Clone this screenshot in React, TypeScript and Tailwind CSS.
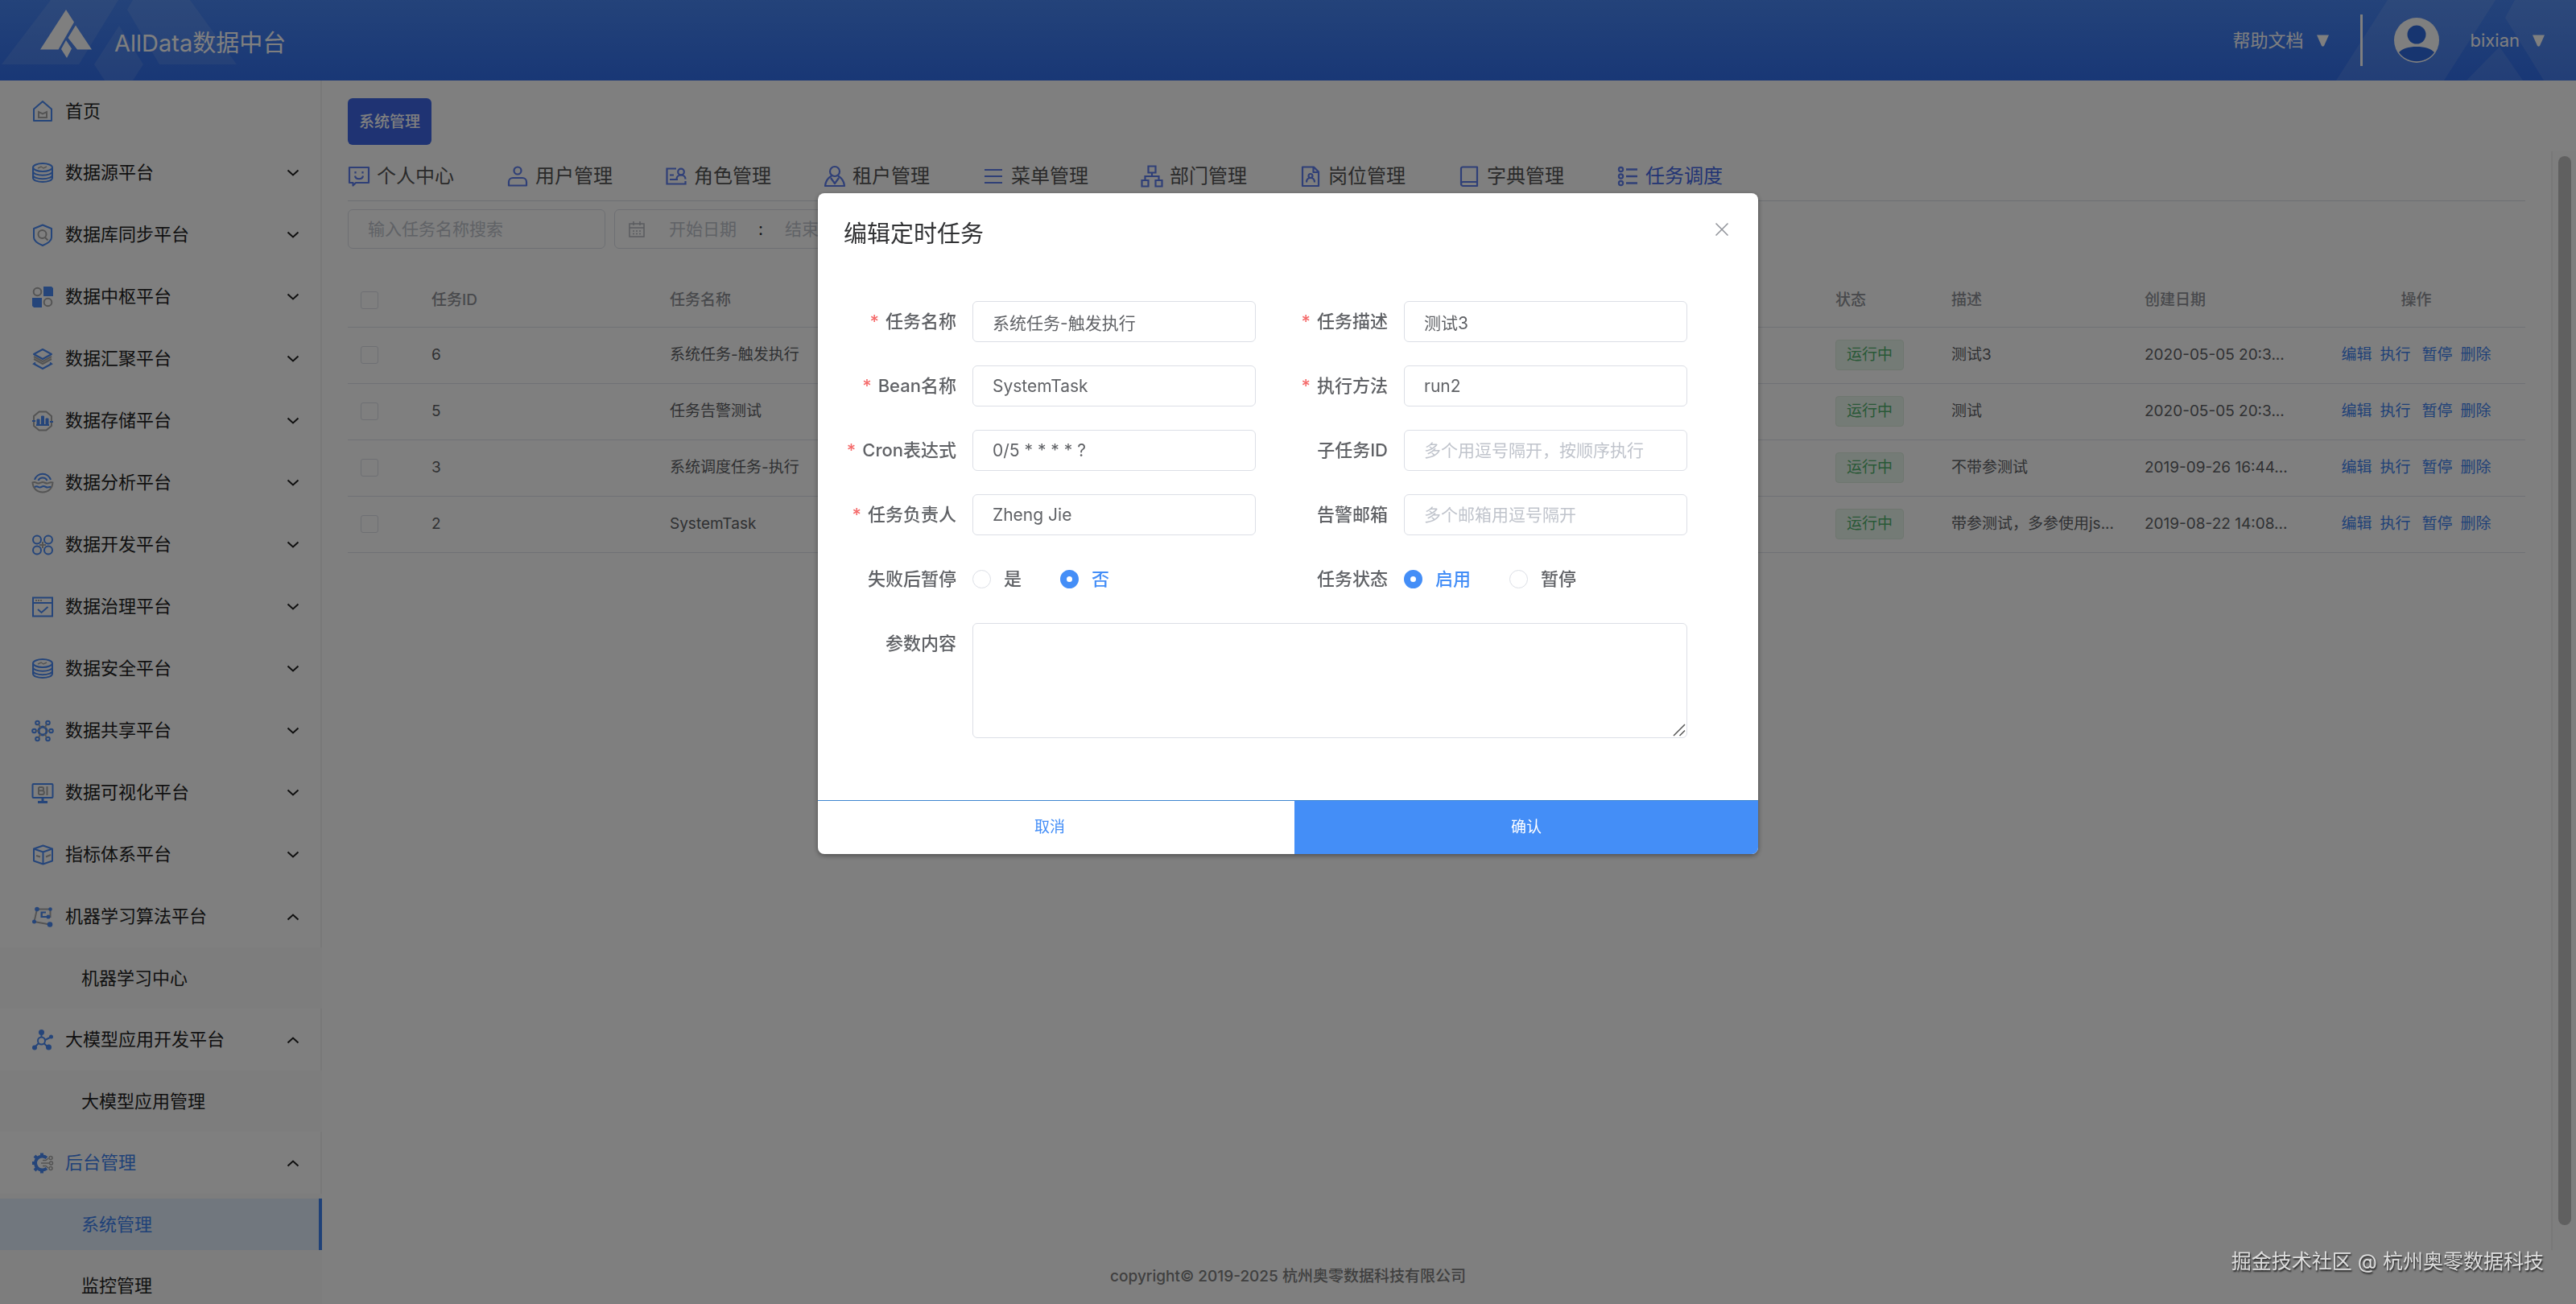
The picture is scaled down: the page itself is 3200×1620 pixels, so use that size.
import React, { useState } from 'react';

const BLUE = '#4a8af4';
const GRAY = '#a8a8a8';
const TAB = '#5f7fee';

interface NavItem {
  label: string;
  icon: React.ReactNode;
  open?: boolean;
  active?: boolean;
  leaf?: boolean;
  children?: { label: string; active?: boolean }[];
}

const NavSvg = ({ children }: { children: React.ReactNode }) => (
  <svg width="28" height="28" viewBox="0 0 28 28" fill="none" stroke={BLUE} strokeWidth="2" className="shrink-0">
    {children}
  </svg>
);

const DatabaseIcon = () => (
  <NavSvg>
    <ellipse cx="14" cy="7" rx="12" ry="5" />
    <path d="M2 7v13c0 3 5.500 5 12 5s12-2 12-5V7" />
    <path d="M2 12c0 2.800 5.500 4.700 12 4.700s12-1.900 12-4.700M2 16.500c0 2.800 5.500 4.700 12 4.700s12-1.900 12-4.700" />
    <path d="M8 8l4-2 3 2 4-2" stroke={GRAY} strokeWidth="1.500" />
  </NavSvg>
);

const navItems: NavItem[] = [
  {
    label: '首页',
    leaf: true,
    icon: (
      <NavSvg>
        <path d="M3 11.500 14 2l11 9.500V26H3z" strokeLinejoin="round" />
        <path d="M9 22v-7l5 2.500 5-2.500v7z" stroke={GRAY} />
      </NavSvg>
    ),
  },
  { label: '数据源平台', icon: <DatabaseIcon /> },
  {
    label: '数据库同步平台',
    icon: (
      <NavSvg>
        <path d="M14 1.500 25 6v11c0 4-5 7.500-11 10C8 24.500 3 21 3 17V6z" strokeLinejoin="round" />
        <circle cx="13.500" cy="13" r="5" stroke={GRAY} />
        <path d="m17 17 3.500 3.500" stroke={GRAY} />
      </NavSvg>
    ),
  },
  {
    label: '数据中枢平台',
    icon: (
      <NavSvg>
        <circle cx="7.500" cy="7.500" r="4.800" stroke={GRAY} />
        <circle cx="20.500" cy="20.500" r="4.800" stroke={GRAY} />
        <path d="M15 1h10l2 2v10H15zM1 15h12v12H3l-2-2z" fill={BLUE} stroke="none" />
      </NavSvg>
    ),
  },
  {
    label: '数据汇聚平台',
    icon: (
      <NavSvg>
        <path d="m3 14 11 6 11-6M3 11l11 6 11-6" stroke={GRAY} />
        <path d="M14 2 3 8l11 6 11-6z" strokeLinejoin="round" />
        <path d="M5 18.500 3 20l11 6 11-6-2-1.500" />
      </NavSvg>
    ),
  },
  {
    label: '数据存储平台',
    icon: (
      <NavSvg>
        <path d="M9.500 2.500h9L25 8v12l-6.500 5.500h-9L3 20V8z" stroke={GRAY} />
        <path d="M7 18v-6h3v6zM12.500 18V8h3v10zM18 18v-7h3v7z" fill={BLUE} stroke={BLUE} strokeWidth="1" />
        <path d="M6 19h16M1 14h4M23 15h4" />
      </NavSvg>
    ),
  },
  {
    label: '数据分析平台',
    icon: (
      <NavSvg>
        <path d="M4 10a10.500 10.500 0 0 1 20 0M8.500 11a6 6 0 0 1 11 0" />
        <path d="M1.500 13.500c4-1.500 4 1 7 1s3-1.500 5.500-1.500 3 1.500 5.500 1.500 3-2 7-1C26 21 21 25.500 14 25.500S2 21 1.500 13.500z" stroke={GRAY} />
        <path d="M4 19c4-2 4 .5 6.500.5S13 18 15 18s3 1.500 5 1.500 2-1 4-.5" />
      </NavSvg>
    ),
  },
  {
    label: '数据开发平台',
    icon: (
      <NavSvg>
        <circle cx="7" cy="7.500" r="5" />
        <circle cx="21" cy="7.500" r="5" />
        <circle cx="7" cy="20.500" r="5" />
        <circle cx="21" cy="20.500" r="5" />
        <path d="M14 10v8M10 14h8" stroke={GRAY} />
      </NavSvg>
    ),
  },
  {
    label: '数据治理平台',
    icon: (
      <NavSvg>
        <rect x="2" y="2.500" width="24" height="23" />
        <path d="M2 9h24M8 17l4.500 4 8-7" />
        <path d="M5 6h8" stroke={GRAY} strokeDasharray="2 1" />
      </NavSvg>
    ),
  },
  { label: '数据安全平台', icon: <DatabaseIcon /> },
  {
    label: '数据共享平台',
    icon: (
      <NavSvg>
        <circle cx="14" cy="14" r="5" strokeWidth="3" />
        <circle cx="7.500" cy="4" r="2.300" />
        <circle cx="20.500" cy="4" r="2.300" />
        <circle cx="3.500" cy="14" r="2.300" />
        <circle cx="24.500" cy="14" r="2.300" />
        <circle cx="7.500" cy="24" r="2.300" />
        <circle cx="20.500" cy="24" r="2.300" />
        <path d="m9 6 2.500 4M19 6l-2.500 4M6 14h3M19 14h3M9 22l2.500-4M19 22l-2.500-4" stroke={GRAY} />
      </NavSvg>
    ),
  },
  {
    label: '数据可视化平台',
    icon: (
      <NavSvg>
        <rect x="1.500" y="3" width="25" height="17" rx="1" />
        <path d="M14 20v5M8 25.500h12" strokeWidth="3" />
        <path d="M9 7v9M9 7h4a2 2 0 0 1 0 4.300H9h4.500a2.300 2.300 0 0 1 0 4.700H9M19.500 6v11" stroke={GRAY} />
      </NavSvg>
    ),
  },
  {
    label: '指标体系平台',
    icon: (
      <NavSvg>
        <path d="M14.500 2.500 26 6.500v15l-11.500 4-11.500-4v-15zM3 6.500l11.500 4 11.500-4M14.500 10.500v15" strokeLinejoin="round" />
        <path d="m6 15 5 1.500M18 16.500l6-2.500" stroke={GRAY} />
      </NavSvg>
    ),
  },
  {
    label: '机器学习算法平台',
    open: true,
    icon: (
      <NavSvg>
        <path d="M3.500 20 7 4.500h16.500V14H13V9M3.500 20l19 3.500" stroke={GRAY} />
        <g fill={BLUE} stroke="none">
          <circle cx="7" cy="4.500" r="2.800" />
          <circle cx="23.500" cy="4.500" r="2.300" />
          <circle cx="21" cy="14" r="2.500" />
          <circle cx="3.500" cy="20" r="2.500" />
          <circle cx="23" cy="23.500" r="3.300" />
        </g>
        <path d="M18 8.500h-5.500V14H21" />
      </NavSvg>
    ),
    children: [{ label: '机器学习中心' }],
  },
  {
    label: '大模型应用开发平台',
    open: true,
    icon: (
      <NavSvg>
        <path d="M12.500 5v6M17 14l8-4M9 18l-5 5M15.500 18l5 5" />
        <circle cx="12.500" cy="15" r="4.500" />
        <g fill={BLUE} stroke="none">
          <circle cx="12.500" cy="4.500" r="3.500" />
          <circle cx="24.500" cy="10" r="2.500" />
          <circle cx="4" cy="23.500" r="3" />
          <circle cx="21.500" cy="23" r="3.500" />
        </g>
      </NavSvg>
    ),
    children: [{ label: '大模型应用管理' }],
  },
  {
    label: '后台管理',
    open: true,
    active: true,
    icon: (
      <NavSvg>
        <path d="M19 7.500a8.500 8.500 0 1 0 0 13" strokeWidth="4" />
        <path d="M13 5V1.500M6.500 7.500 4 5M4.500 14H1M6.500 20.500 4 23M13 23v3.500" strokeWidth="4" />
        <path d="M12 14h10M14 10.500h4l3-2.500M14 17.500h4l3 2.500" stroke={GRAY} strokeWidth="1.500" />
        <g stroke={GRAY} strokeWidth="1.500">
          <circle cx="24" cy="7.500" r="2" />
          <circle cx="24.500" cy="14" r="2" />
          <circle cx="24" cy="20.500" r="2" />
        </g>
      </NavSvg>
    ),
    children: [{ label: '系统管理', active: true }, { label: '监控管理' }],
  },
];

const TabSvg = ({ children }: { children: React.ReactNode }) => (
  <svg width="28" height="28" viewBox="0 0 28 28" fill="none" stroke={TAB} strokeWidth="2.200" className="shrink-0">
    {children}
  </svg>
);

const tabs = [
  {
    label: '个人中心',
    icon: (
      <TabSvg>
        <path d="M2 3h24v19H10l-3.500 3.500V22H2z" strokeLinejoin="round" />
        <path d="M9 13.500c1 5 9 5 10 0M9.500 8v2.500M18.500 8v2.500" />
      </TabSvg>
    ),
  },
  {
    label: '用户管理',
    icon: (
      <TabSvg>
        <circle cx="14" cy="7" r="4.500" />
        <path d="M3 25.500v-4.500a5 5 0 0 1 5-5h12a5 5 0 0 1 5 5v4.500z" strokeLinejoin="round" />
      </TabSvg>
    ),
  },
  {
    label: '角色管理',
    icon: (
      <TabSvg>
        <path d="M14 4.500H2.500v19h23V20M6 12.500h5M6 18h10" />
        <circle cx="20" cy="8.500" r="3.800" />
        <path d="M14.500 17.500c0-3 2.500-5 5.500-5s5.500 2 5.500 5" />
      </TabSvg>
    ),
  },
  {
    label: '租户管理',
    icon: (
      <TabSvg>
        <circle cx="14" cy="8" r="6" />
        <path d="M10 13.500C5.500 16 2.500 20.500 2 26h24c-.5-5.500-3.500-10-8-12.500M9 16l5 7 5-7" strokeLinejoin="round" />
      </TabSvg>
    ),
  },
  {
    label: '菜单管理',
    icon: (
      <TabSvg>
        <path d="M3 6h22M3 14h22M3 22h22" />
      </TabSvg>
    ),
  },
  {
    label: '部门管理',
    icon: (
      <TabSvg>
        <path d="M9.500 1.500h9v8h-9zM1.500 19h8v7.500h-8zM18.500 19h8v7.500h-8zM14 9.500V14M5.500 19v-5h17v5" />
      </TabSvg>
    ),
  },
  {
    label: '岗位管理',
    icon: (
      <TabSvg>
        <path d="M4 2.500h14l6 6v17.500H4zM17.500 3v6H24" strokeLinejoin="round" />
        <circle cx="14" cy="13.500" r="2.500" />
        <path d="M9 21.500c0-3.500 2-5.500 5-5.500s5 2 5 5.500" />
      </TabSvg>
    ),
  },
  {
    label: '字典管理',
    icon: (
      <TabSvg>
        <path d="M4 23V4.500a2 2 0 0 1 2-2h18V26H6.500A2.500 2.500 0 0 1 4 23.500a2.500 2.500 0 0 1 2.500-2.500H24" strokeLinejoin="round" />
      </TabSvg>
    ),
  },
  {
    label: '任务调度',
    active: true,
    icon: (
      <TabSvg>
        <path d="M12 5.500h14M12 14h14M12 22.500h14" strokeWidth="2.600" />
        <circle cx="5.500" cy="5.500" r="2.600" />
        <circle cx="5.500" cy="14" r="2.600" />
        <circle cx="5.500" cy="22.500" r="2.600" />
      </TabSvg>
    ),
  },
];

const tasks = [
  { id: 6, name: '系统任务-触发执行', desc: '测试3', date: '2020-05-05 20:3...' },
  { id: 5, name: '任务告警测试', desc: '测试', date: '2020-05-05 20:3...' },
  { id: 3, name: '系统调度任务-执行', desc: '不带参测试', date: '2019-09-26 16:44...' },
  { id: 2, name: 'SystemTask', desc: '带参测试，多参使用js...', date: '2019-08-22 14:08...' },
];

const Chevron = ({ up }: { up?: boolean }) => (
  <svg width="16" height="10" viewBox="0 0 16 10" fill="none" stroke="#1f1f1f" strokeWidth="2">
    {up ? <path d="m1.500 8.500 6.500-6 6.500 6" /> : <path d="m1.500 1.500 6.500 6 6.500-6" />}
  </svg>
);

const Caret = () => (
  <svg width="15" height="15" viewBox="0 0 15 15" fill="#fff">
    <path d="M0 .5h15L9 14q-1.500 1.500-3 0z" />
  </svg>
);

const Header = () => (
  <header className="relative h-[100px] shrink-0 bg-linear-to-b from-[#4886f4] to-[#326fec] text-white">
    <svg className="absolute left-0 top-0" width="300" height="100" fill="#fff" fillOpacity="0.1">
      <path d="M63 0h84L98 80H2zM165 0h71l58 80h-96L158 12zM148 32l30 48-13 20h-35l-13-20z" />
    </svg>
    <svg className="absolute right-0 top-0" width="300" height="100" fill="#fff" fillOpacity="0.1">
      <path d="M66 0h134l-64 100H2zM224 0h76v100h-40L212 22zM205 58l29 42h-70z" />
    </svg>
    <div className="relative flex h-full items-center justify-between pl-[50px] pr-[39px]">
      <div className="flex items-center gap-7">
        <svg width="64" height="60" viewBox="0 0 64 60" fill="#fff" className="mb-4">
          <path d="M32 0 42 15.500 22.500 49.500H0zM44 19.500 64 49.500H46L34.500 35zM32 38l7 10.500L33 60l-7-11z" />
        </svg>
        <span className="pt-2 text-[29px] leading-10">AllData数据中台</span>
      </div>
      <div className="flex items-center text-[22px]">
        <button type="button" className="flex items-center gap-4">
          帮助文档 <Caret />
        </button>
        <span className="ml-[39px] h-16 w-[3px] bg-white" />
        <svg width="56" height="56" viewBox="0 0 56 56" className="ml-[39px]">
          <circle cx="28" cy="28" r="28" fill="#fff" />
          <circle cx="28" cy="21" r="11.500" fill="#2f6be0" />
          <path d="M6 43c4-4.500 12-7 22-7s18 2.500 22 7a27 27 0 0 1-44 0z" fill="#2f6be0" />
        </svg>
        <button type="button" className="ml-[39px] flex items-center gap-4">
          bixian <Caret />
        </button>
      </div>
    </div>
  </header>
);

const Sidebar = () => (
  <nav className="w-[400px] shrink-0 overflow-hidden bg-white text-[22px] text-[#222]">
    <ul>
      {navItems.map((item) => (
        <li key={item.label}>
          <button
            type="button"
            className={`flex w-full items-center border-r-2 border-[#f3f3f3] pl-[39px] pr-[26px] ${item.leaf ? 'h-[76px]' : 'h-[77px]'} ${item.active ? 'text-[#3f83f0]' : ''}`}
          >
            {item.icon}
            <span className="ml-[14px] flex-1 text-left">{item.label}</span>
            {!item.leaf && <Chevron up={item.open} />}
          </button>
          {item.children && (
            <ul className="bg-[#fafafa]">
              {item.children.map((sub) => (
                <li key={sub.label} className="flex h-[76px] items-center">
                  <a
                    href="#"
                    className={`flex h-16 w-full items-center pl-[101px] ${sub.active ? 'border-r-4 border-[#3f83f0] bg-[#e3effc] text-[#3f83f0]' : ''}`}
                  >
                    {sub.label}
                  </a>
                </li>
              ))}
            </ul>
          )}
        </li>
      ))}
    </ul>
  </nav>
);

const checkbox = 'block size-[22px] appearance-none rounded-[3px] border border-[#dcdfe6] bg-white';

const TaskTable = () => (
  <table className="mt-[31px] w-full table-fixed text-left text-[19px] text-[#606266]">
    <thead>
      <tr className="h-[66px] border-b border-[#dfe3ea] text-[#909399]">
        <th className="w-[104px] pl-4">
          <input type="checkbox" aria-label="全选" className={checkbox} />
        </th>
        <th className="w-[296px] font-medium">任务ID</th>
        <th className="font-medium">任务名称</th>
        <th className="w-36 font-medium">状态</th>
        <th className="w-60 font-medium">描述</th>
        <th className="w-[202px] font-medium">创建日期</th>
        <th className="w-[271px] text-center font-medium">操作</th>
      </tr>
    </thead>
    <tbody>
      {tasks.map((t) => (
        <tr key={t.id} className="h-[70px] border-b border-[#dfe3ea]">
          <td className="pl-4">
            <input type="checkbox" aria-label={`选择 ${t.id}`} className={checkbox} />
          </td>
          <td>{t.id}</td>
          <td>{t.name}</td>
          <td>
            <span className="inline-flex h-[38px] items-center rounded border border-[#dcecdf] bg-[#e9f6ec] px-[13px] text-[#52b36f]">
              运行中
            </span>
          </td>
          <td className="whitespace-nowrap">{t.desc}</td>
          <td className="whitespace-nowrap">{t.date}</td>
          <td className="text-[#3f83f0]">
            <div className="flex justify-center gap-[10px]">
              <button type="button">编辑</button>
              <button type="button">执行</button>
              <button type="button" className="ml-1">暂停</button>
              <button type="button">删除</button>
            </div>
          </td>
        </tr>
      ))}
    </tbody>
  </table>
);

const Main = () => (
  <main className="flex min-w-0 flex-1 flex-col bg-white">
    <div className="px-8 pb-2 pt-[22px]">
      <button type="button" className="block h-[58px] rounded-md bg-[#3e67e6] px-[14px] pt-[2px] text-[19px] font-medium text-white">
        系统管理
      </button>
    </div>
    <div className="flex min-h-0 flex-1">
      <section className="min-w-0 flex-1 px-8">
        <div className="flex h-[62px] items-center gap-[65px] border-b border-[#dcdfe6] text-2xl text-[#555]">
          {tabs.map((tab) => (
            <a key={tab.label} href="#" className={`flex items-center gap-2 whitespace-nowrap ${tab.active ? 'text-[#4468e8]' : ''}`}>
              {tab.icon}
              {tab.label}
            </a>
          ))}
        </div>
        <div className="mt-[10px] flex gap-[11px] text-[21px]">
          <input
            type="text"
            aria-label="任务名称"
            placeholder="输入任务名称搜索"
            className="h-[49px] w-80 rounded-md border border-[#dcdfe6] px-6 placeholder:text-[#c0c4cc]"
          />
          <div className="flex h-[49px] items-center rounded-md border border-[#dcdfe6] pl-[17px] pr-12">
            <svg width="20" height="20" viewBox="0 0 20 20" fill="none" stroke="#b4b8c0" strokeWidth="1.500">
              <path d="M1 3h18v16H1zM1 8h18M6 0v5M14 0v5" />
              <path d="M5 12h10M5 15.500h10" strokeDasharray="2 2" />
            </svg>
            <input
              type="text"
              aria-label="开始日期"
              placeholder="开始日期"
              className="ml-4 w-28 text-center placeholder:text-[#c0c4cc]"
            />
            <span className="w-8 text-center text-[#303133]">:</span>
            <input type="text" aria-label="结束日期" placeholder="结束日期" className="w-28 text-center placeholder:text-[#c0c4cc]" />
          </div>
        </div>
        <TaskTable />
      </section>
      <div className="w-[31px] border-l-2 border-[#f1f1f1] bg-[#fcfcfc] pb-[31px] pl-[7px] pt-[6px]">
        <div className="h-full w-4 rounded-full bg-[#c1c1c1]" />
      </div>
    </div>
    <footer className="flex h-[67px] items-center justify-center pr-[400px] text-[19px] font-medium text-[#808080]">
      copyright© 2019-2025 杭州奥零数据科技有限公司
    </footer>
  </main>
);

interface FieldProps {
  id: string;
  label: string;
  required?: boolean;
  value?: string;
  placeholder?: string;
}

const labelCls = 'w-40 shrink-0 pr-5 text-right text-[22px] font-medium leading-[51px] text-[#606266]';

const Field = ({ id, label, required, value, placeholder }: FieldProps) => (
  <div className="flex">
    <label htmlFor={id} className={labelCls}>
      {required && <span className="mr-2 text-[#f56c6c]">*</span>}
      {label}
    </label>
    <input
      id={id}
      type="text"
      defaultValue={value}
      placeholder={placeholder}
      className="h-[51px] min-w-0 flex-1 rounded-md border border-[#dcdfe6] px-6 text-[21px] text-[#606266] placeholder:text-[#c0c4cc]"
    />
  </div>
);

interface ChoiceProps {
  name: string;
  label: string;
  options: string[];
  initial: string;
}

const Choice = ({ name, label, options, initial }: ChoiceProps) => {
  const [value, setValue] = useState(initial);

  return (
    <div role="radiogroup" aria-label={label} className="flex">
      <span className={labelCls}>{label}</span>
      <div className="flex items-center gap-12 text-[22px] font-medium">
        {options.map((opt) => (
          <label key={opt} className={`flex items-center gap-4 ${value === opt ? 'text-[#448ef7]' : 'text-[#606266]'}`}>
            <input
              type="radio"
              name={name}
              checked={value === opt}
              onChange={() => setValue(opt)}
              className="size-[23px] appearance-none rounded-full border border-[#dcdfe6] bg-white checked:border-8 checked:border-[#448ef7]"
            />
            {opt}
          </label>
        ))}
      </div>
    </div>
  );
};

const EditDialog = () => (
  <div className="fixed inset-0 z-10 bg-black/50">
    <div
      role="dialog"
      aria-label="编辑定时任务"
      className="mx-auto mt-[240px] w-[1168px] overflow-hidden rounded-lg bg-white shadow-[0_2px_6px_rgba(0,0,0,0.4)]"
    >
      <div className="flex h-[102px] items-center justify-between pl-8 pr-[37px]">
        <h2 className="text-[29px] text-[#303133]">编辑定时任务</h2>
        <button type="button" aria-label="关闭" className="mb-3">
          <svg width="16" height="16" viewBox="0 0 16 16" stroke="#909399" strokeWidth="1.500">
            <path d="m.5.5 15 15M15.500.5l-15 15" />
          </svg>
        </button>
      </div>
      <form className="grid grid-cols-[512px_512px] gap-x-6 gap-y-[29px] px-8 pb-[77px] pt-8">
        <Field id="name" label="任务名称" required value="系统任务-触发执行" />
        <Field id="desc" label="任务描述" required value="测试3" />
        <Field id="bean" label="Bean名称" required value="SystemTask" />
        <Field id="method" label="执行方法" required value="run2" />
        <Field id="cron" label="Cron表达式" required value="0/5 * * * * ?" />
        <Field id="sub" label="子任务ID" placeholder="多个用逗号隔开，按顺序执行" />
        <Field id="owner" label="任务负责人" required value="Zheng Jie" />
        <Field id="email" label="告警邮箱" placeholder="多个邮箱用逗号隔开" />
        <Choice name="pause" label="失败后暂停" options={['是', '否']} initial="否" />
        <Choice name="status" label="任务状态" options={['启用', '暂停']} initial="启用" />
        <div className="col-span-2 flex">
          <label htmlFor="params" className={labelCls}>
            参数内容
          </label>
          <div className="relative flex-1">
            <textarea id="params" className="block h-[143px] w-full resize-none rounded-md border border-[#dcdfe6] px-6 py-2 text-[21px]" />
            {/* resize grip */}
            <svg width="16" height="16" viewBox="0 0 16 16" stroke="#555" strokeWidth="1.500" className="pointer-events-none absolute bottom-[2px] right-[2px]">
              <path d="M1 15 15 1M8.500 15 15 8.500" />
            </svg>
          </div>
        </div>
      </form>
      <div className="flex h-[67px] gap-4 border-t border-[#3f86d0] text-[19px]">
        <button type="button" className="flex-1 text-[#448ef7]">
          取消
        </button>
        <button type="button" className="flex-1 bg-[#448ef7] text-white">
          确认
        </button>
      </div>
    </div>
  </div>
);

const App: React.FC = () => {
  return (
    <div className="flex h-screen flex-col overflow-hidden font-['Inter','Noto_Sans_CJK_SC',sans-serif]">
      <Header />
      <div className="flex min-h-0 flex-1">
        <Sidebar />
        <Main />
      </div>
      <EditDialog />
      <p className="fixed bottom-[34px] right-10 z-20 text-[25px] text-[#dedede] [text-shadow:1px_2px_2px_#222]">
        掘金技术社区 @ 杭州奥零数据科技
      </p>
    </div>
  );
};

export default App;
